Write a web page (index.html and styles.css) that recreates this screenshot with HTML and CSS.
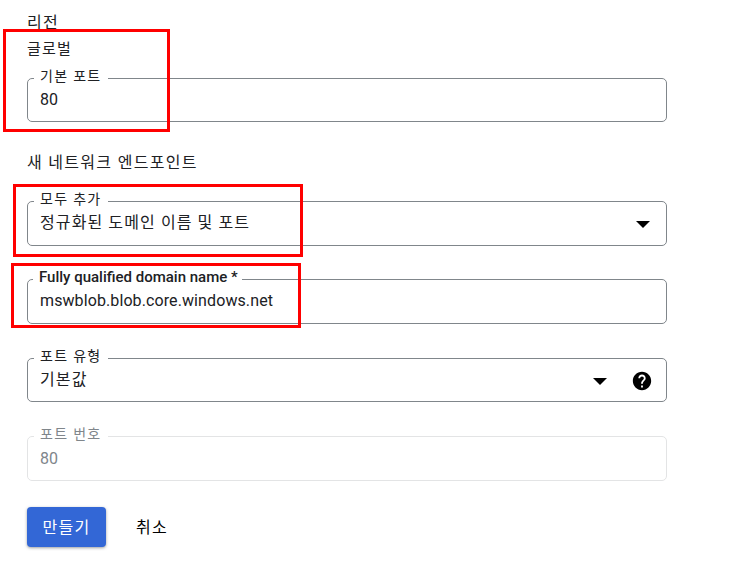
FILE: index.html
```html
<!DOCTYPE html>
<html lang="ko">
<head>
    <meta charset="utf-8">
    <title>새 네트워크 엔드포인트</title>
    <link rel="stylesheet" href="styles.css">
</head>
<body>
    <div class="page">
        <div class="title">리전</div>
        <div class="subtitle">글로벌</div>
        <fieldset class="field field-first">
            <legend>기본 포트</legend>
            <div class="value">80</div>
        </fieldset>

        <div class="section">새 네트워크 엔드포인트</div>
        <fieldset class="field field-add">
            <legend>모두 추가</legend>
            <div class="value ko">정규화된 도메인 이름 및 포트</div>
            <span class="arrow"></span>
        </fieldset>
        <fieldset class="field field-fqdn">
            <legend class="strong">Fully qualified domain name *</legend>
            <div class="value">mswblob.blob.core.windows.net</div>
        </fieldset>
        <fieldset class="field field-type">
            <legend>포트 유형</legend>
            <div class="value ko">기본값</div>
            <span class="arrow"></span>
            <svg class="help" viewBox="0 0 24 24" width="22" height="22">
                <path d="M12 2C6.48 2 2 6.48 2 12s4.48 10 10 10 10-4.48 10-10S17.52 2 12 2zm1 17h-2v-2h2v2zm2.07-7.75l-.9.92C13.45 12.9 13 13.5 13 15h-2v-.5c0-1.1.45-2.1 1.17-2.83l1.24-1.26c.37-.36.59-.86.59-1.41 0-1.1-.9-2-2-2s-2 .9-2 2H8c0-2.21 1.79-4 4-4s4 1.79 4 4c0 .88-.36 1.68-.93 2.25z"/>
            </svg>
        </fieldset>
        <fieldset class="field field-number disabled">
            <legend>포트 번호</legend>
            <div class="value">80</div>
        </fieldset>

        <div class="actions">
            <button class="btn btn-primary">만들기</button>
            <button class="btn btn-text">취소</button>
        </div>
    </div>

    <!-- red annotation boxes drawn over the form -->
    <div class="mark mark-1"></div>
    <div class="mark mark-2"></div>
    <div class="mark mark-3"></div>
</body>
</html>
```
FILE: styles.css
```css
* {
    box-sizing: border-box;
}
html, body {
    margin: 0;
    height: 564px;
    overflow: hidden;
    background-color: #fff;
}
body {
    position: relative;
    font-family: Roboto, "Noto Sans CJK KR", sans-serif;
    font-size: 14px;
    color: #202124;
}
.page {
    width: 667px;
    padding: 14px 0 0 27px;
}
.title {
    font-size: 16px;
    letter-spacing: 1.3px;
    line-height: 18px;
}
.subtitle {
    margin-top: 8px;
    font-size: 15px;
    letter-spacing: 1.2px;
    line-height: 18px;
}
.section {
    margin-top: 31px;
    font-size: 16px;
    letter-spacing: 1.3px;
    line-height: 20px;
}
.field {
    position: relative;
    display: flex;
    align-items: flex-start;
    height: 53px;
    margin: 0;
    padding: 0 12px;
    border: 1px solid #80868b;
    border-radius: 5px;
}
.field legend {
    margin-left: -6px;
    padding: 0 6px 4px;
    font-size: 14px;
    letter-spacing: 1.3px;
    line-height: 14px;
}
.field .strong {
    margin-left: -7px;
    padding-right: 4px;
    font-weight: 500;
    font-size: 15px;
    letter-spacing: 0;
}
.field-first {
    margin-top: 11px;
}
.field-add {
    height: 54px;
    margin-top: 19px;
}
.field-fqdn {
    height: 54px;
    margin-top: 24px;
}
.field-type {
    margin-top: 25px;
}
.field-number {
    margin-top: 25px;
    height: 54px;
}
.value {
    flex: 1;
    font-size: 16px;
    letter-spacing: 0.1px;
    line-height: 20px;
    padding-top: 3px;
}
.value.ko {
    letter-spacing: 1.1px;
}
.disabled {
    border-color: #e3e4e5;
    color: #80868b;
}
.disabled .value {
    padding-top: 4px;
}
.arrow {
    width: 0;
    height: 0;
    margin: 11px 4px 0 0;
    border-left: 7px solid transparent;
    border-right: 7px solid transparent;
    border-top: 7px solid #000;
}
.field-type .arrow {
    margin-right: 24px;
}
.help {
    margin: 3px 1px 0 0;
}
.actions {
    display: flex;
    align-items: center;
    gap: 8px;
    margin-top: 26px;
}
.btn {
    height: 40px;
    padding-bottom: 3px;
    border: none;
    border-radius: 4px;
    font-family: inherit;
    font-size: 16px;
    letter-spacing: 1.3px;
    cursor: pointer;
}
.btn-primary {
    width: 79px;
    background-color: #3367d6;
    color: #fff;
    box-shadow: 0 1px 3px rgba(60, 64, 67, 0.5);
}
.btn-text {
    width: 76px;
    background: none;
    color: #000;
}
.mark {
    position: absolute;
    border: 3px solid #f00;
}
.mark-1 {
    left: 3px;
    top: 29px;
    width: 167px;
    height: 103px;
}
.mark-2 {
    left: 13px;
    top: 184px;
    width: 290px;
    height: 73px;
}
.mark-3 {
    left: 11px;
    top: 263px;
    width: 290px;
    height: 65px;
}
```
